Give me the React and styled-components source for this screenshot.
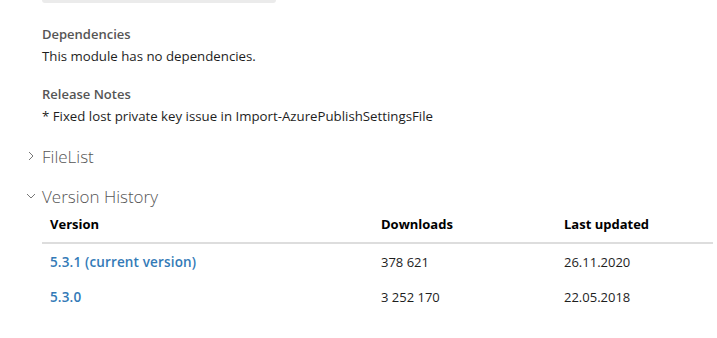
import React from "react";
import styled, { createGlobalStyle } from "styled-components";

const GlobalStyle = createGlobalStyle`
  html, body {
    margin: 0;
    padding: 0;
    background: #fff;
  }
  body {
    font-family: "Segoe UI", "Open Sans", sans-serif;
    font-size: 13.25px;
    color: #1e1e1e;
  }
`;

const versions = [
  { label: "5.3.1 (current version)", downloads: "378 621", updated: "26.11.2020" },
  { label: "5.3.0", downloads: "3 252 170", updated: "22.05.2018" },
];

function Chevron({ open }) {
  return (
    <ChevronSvg viewBox="0 0 10 10" width="10" height="10">
      {open ? (
        <polyline points="1,3 5,7 9,3" fill="none" stroke="#777" strokeWidth="1" />
      ) : (
        <polyline points="3,1 7,5 3,9" fill="none" stroke="#777" strokeWidth="1" />
      )}
    </ChevronSvg>
  );
}

function App() {
  return (
    <Page>
      <GlobalStyle />
      <InstallBox />
      <Details>
        <Block>
          <Label>Dependencies</Label>
          <Text>This module has no dependencies.</Text>
        </Block>
        <Block>
          <Label>Release Notes</Label>
          <Text>* Fixed lost private key issue in Import-AzurePublishSettingsFile</Text>
        </Block>
      </Details>
      <Sections>
        <Section>
          <Chevron />
          <SectionTitle>FileList</SectionTitle>
        </Section>
        <Section>
          <Chevron open />
          <SectionTitle>Version History</SectionTitle>
        </Section>
      </Sections>
      <Table>
        <thead>
          <tr>
            <Th style={{ width: 315 }}>Version</Th>
            <Th style={{ width: 167 }}>Downloads</Th>
            <Th>Last updated</Th>
          </tr>
        </thead>
        <tbody>
          {versions.map((v) => (
            <tr key={v.label}>
              <Td>
                <VersionLink href="#">{v.label}</VersionLink>
              </Td>
              <Td>{v.downloads}</Td>
              <Td>{v.updated}</Td>
            </tr>
          ))}
        </tbody>
      </Table>
    </Page>
  );
}

export default App;

const Page = styled.div`
  padding: 0 4px 0 42px;
`;

const InstallBox = styled.div`
  width: 234px;
  height: 3px;
  background: #ebebeb;
  border-radius: 0 0 3px 3px;
  margin-bottom: 21px;
`;

const Details = styled.div`
  display: flex;
  flex-direction: column;
  gap: 17px;
`;

const Block = styled.div``;

const Label = styled.div`
  font-size: 13px;
  font-weight: 600;
  color: #555;
  line-height: 20px;
  margin-bottom: 1px;
`;

const Text = styled.div`
  line-height: 22px;
`;

const Sections = styled.div`
  display: flex;
  flex-direction: column;
  gap: 8px;
  margin-top: 13px;
`;

const Section = styled.div`
  display: flex;
  align-items: center;
  margin-left: -16px;
  height: 32px;
`;

const ChevronSvg = styled.svg`
  margin-right: 6px;
  flex: none;
`;

const SectionTitle = styled.div`
  font-size: 17px;
  font-weight: 300;
  color: #555;
`;

const Table = styled.table`
  width: 671px;
  border-collapse: collapse;
  font-size: 13px;
`;

const Th = styled.th`
  text-align: left;
  font-weight: 700;
  color: #000;
  padding: 2px 8px 8px;
  line-height: 20px;
  border-bottom: 2px solid #ddd;
`;

const Td = styled.td`
  padding: 8px 8px 6px;
  line-height: 21px;
`;

const VersionLink = styled.a`
  color: #337ab7;
  font-size: 13.5px;
  font-weight: 600;
  letter-spacing: 0.15px;
  text-decoration: none;
`;
